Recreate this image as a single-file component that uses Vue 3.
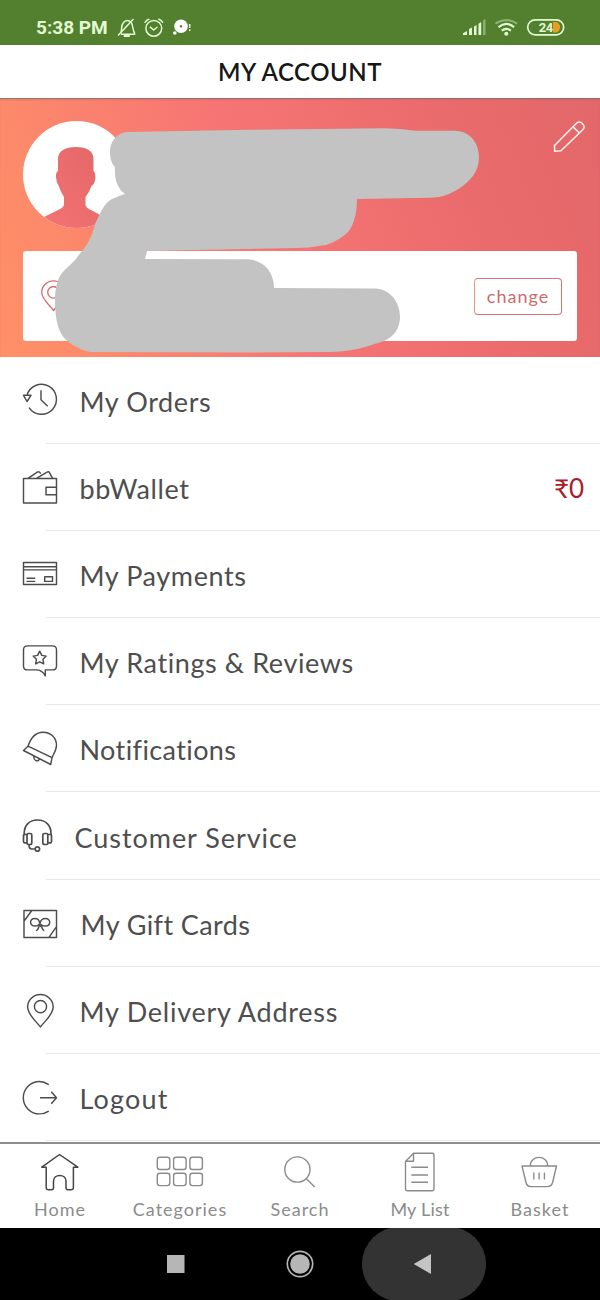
<script setup>
const rowHeight = 87.2
const listTop = 356.5

const rows = [
  { label: 'My Orders', kind: 'orders' },
  { label: 'bbWallet', kind: 'wallet', value: '₹0' },
  { label: 'My Payments', kind: 'payments' },
  { label: 'My Ratings & Reviews', kind: 'ratings' },
  { label: 'Notifications', kind: 'bell' },
  { label: 'Customer Service', kind: 'headset' },
  { label: 'My Gift Cards', kind: 'gift' },
  { label: 'My Delivery Address', kind: 'delivery' },
  { label: 'Logout', kind: 'logout' },
]

const icons = {
  orders:
    'M27 394.8A15 15 0 1 1 29 407.2M23.5 394.8H31L27 401ZM41 389.7V399.2L47.7 405.7',
  wallet:
    'M23.5 478.3H56.5V502.7H23.5ZM56.5 487H46V494.5H56.5M28 478L37.3 471.8Q39 470.8 40.8 473.3M36.5 478L47 471.8Q48.7 470.8 49.6 472.5L52.5 478',
  payments:
    'M23.5 562.5H56.5V584.5H23.5ZM23.5 566.7H56.5M23.5 569.8H56.5M26.5 578.2H35.2M26.5 581.3H35.2M44.7 576.7H52.5V581.3H44.7Z',
  ratings:
    'M27.5 646H52.5Q56.5 646 56.5 650V666Q56.5 670 52.5 670H45.3V676Q42.5 670.5 37 670H27.5Q23.5 670 23.5 666V650Q23.5 646 27.5 646ZM39.7 651.3L41.8 655.5L46.2 656.2L43 659.4L43.7 664L39.7 661.9L35.7 664L36.4 659.4L33.2 656.2L37.6 655.5Z',
  bell:
    'M28 746.5C30.5 739 35 732.5 43 732.5C51 732.5 56.5 738.5 56.5 745.5C56.5 750.5 53.5 754 52 758M28 746.5L52 758L50.7 764.8L23.5 750.8ZM33.7 756.3C33.5 760.5 37 763 39.7 759.3',
  headset:
    'M24.2 836V834C24.2 825.5 29.5 820.5 37.5 820.5S51 825.5 51 834V836M27 835H24.2Q23.5 835 23.5 836V842Q23.5 843.3 24.5 843.3H27M28.3 834H30.3Q31.8 834 31.8 835.5V843Q31.8 845 30.3 845H28.3Q27 845 27 843.5V835.5Q27 834 28.3 834ZM46.5 834H44.5Q42.8 834 42.8 835.5V843Q42.8 845 44.5 845H46.5Q47.8 845 47.8 843.5V835.5Q47.8 834 46.5 834ZM47.8 835H50.5Q51.5 835 51.5 836V842Q51.5 843.3 50.5 843.3H47.8M29 845.5Q29 849.5 32 849.5H35M39.6 849.5A2.2 2.2 0 1 1 35.2 849.5A2.2 2.2 0 1 1 39.6 849.5',
  gift:
    'M24 910.2H56.5V937.3H24ZM24 921L31.8 910.2M48.8 937.3L56.5 926.3M39.5 922C39 919.5 37 918.2 34.8 918.2C28.8 918.2 29.5 925.8 35 925.8C38 925.8 39.5 924.5 40.2 922.2C41 919.5 43 918.2 45.5 918.2C51.3 918.2 51 925.8 45.3 925.8C42.3 925.8 40.5 924.5 39.5 922ZM39 924L40.3 926.2L41.8 924M39 926C38.5 928 37.5 930 36 930.3M41.5 926C42 928 43 930 44.3 930.3',
  delivery:
    'M40.4 1026.8C36 1021 27.6 1014.5 27.6 1007A12.8 12.5 0 0 1 53.2 1007C53.2 1014.5 44.8 1021 40.4 1026.8ZM46.6 1006.5A6.1 6.1 0 1 1 34.4 1006.5A6.1 6.1 0 1 1 46.6 1006.5',
  logout:
    'M48.8 1084.8C45.5 1082.7 42.5 1081.6 39.5 1081.6A16.2 16.2 0 0 0 39.5 1114C43 1114 46 1113 48.8 1111.2M40 1097.8H56.3M51.3 1091.8L56.5 1097.8L51.3 1103.8',
}

const tabs = [
  { label: 'Home', kind: 'home', path: 'M59.5 1154.5L77.8 1167.2H73.4V1187.5Q73.4 1189.8 71 1189.8H68Q66 1189.8 66 1187.5V1181C66 1173.5 53.5 1173.5 53.5 1181V1187.5Q53.5 1189.8 51.5 1189.8H48.5Q46.2 1189.8 46.2 1187.5V1167.2H41.8Z' },
  { label: 'Categories', kind: 'categories', path: '' },
  { label: 'Search', kind: 'search', path: 'M310 1169.5A12.6 12.6 0 1 1 284.8 1169.5A12.6 12.6 0 1 1 310 1169.5M306.3 1178.7L314.8 1187' },
  { label: 'My List', kind: 'notes', path: 'M413.5 1153.3H432.5Q434 1153.3 434 1155V1189Q434 1190.7 432.5 1190.7H407.2Q405.5 1190.7 405.5 1189V1161.5ZM413.5 1153.3V1161.3H405.5M411.3 1167.3H428M411.3 1175H428M411.3 1182.3H428' },
  { label: 'Basket', kind: 'basket', path: 'M522 1166H556.5L552.6 1182.5Q551.4 1186.6 547.5 1186.6H531Q527 1186.6 526 1182.5ZM530.3 1166C530.3 1154.5 547.7 1154.5 547.7 1166M533.8 1172.5V1179.5M539.1 1172.5V1179.5M544.4 1172.5V1179.5' },
]
</script>

<template>
  <div class="screen">
    <header class="status">
      <span class="time">5:38 PM</span>
      <svg class="status-left" width="80" height="24" viewBox="116 16 80 24">
        <g fill="none" stroke="#e3fad4" stroke-width="1.5" stroke-linecap="round">
          <path d="M121 32.5C122 29 121 25 123.5 22.5Q127 18.5 131 22.2C133.5 25 132 29 134.5 33V34.2H121.5" />
          <path d="M118.5 35L133 19.5" />
          <path d="M124.5 36H129" stroke-width="2" />
          <circle cx="153.8" cy="28.3" r="7.9" />
          <path d="M150.3 27.2L153.7 30L157 27.2M145 22.3Q146.5 20 148.8 19.2M158.8 19.2Q161.2 20 162.6 22.3" />
        </g>
        <circle cx="181" cy="26.3" r="6.8" fill="#fff" />
        <circle cx="181" cy="26.3" r="1.2" fill="#52802e" />
        <circle cx="174.8" cy="33" r="1.8" fill="#fff" />
        <path d="M189.7 24V28M189.7 29.3V31" stroke="#e3fad4" stroke-width="1.5" />
      </svg>
      <svg class="status-right" width="106" height="24" viewBox="462 16 106 24">
        <g fill="#e3fad4">
          <path d="M463 35V33.2L467 31V35ZM469 35V29L472 27.5V35ZM474 35V26.5L476.5 25V35ZM478.5 35V23.7L481.2 22V35Z" />
          <path d="M483 35V20.5L485.5 19V35Z" opacity=".4" />
          <circle cx="506.3" cy="33.8" r="2" />
        </g>
        <g fill="none" stroke="#e3fad4" stroke-width="2.2">
          <path d="M501.7 30.7Q506.3 27 510.9 30.7M498.5 27.2Q506.3 20.5 514.1 27.2" />
          <path d="M495.4 23.6Q506.3 16.5 517.2 23.6" opacity=".4" />
        </g>
        <path d="M553 22H556.5A5 5.5 0 0 1 556.5 32.5H553Z" fill="#e99e23" />
        <rect x="527.7" y="19.8" width="36" height="15" rx="7.5" fill="none" stroke="#e3fad4" stroke-width="1.7" />
        <text x="538.7" y="32" class="battery">24</text>
      </svg>
    </header>

    <div class="title">MY ACCOUNT</div>

    <section class="hero">
      <svg class="avatar" width="108" height="108" viewBox="23 121 108 108">
        <defs>
          <clipPath id="face"><circle cx="76.5" cy="174.5" r="53.5" /></clipPath>
          <linearGradient id="skin" x1="0" y1="1" x2="1" y2="0">
            <stop offset="0" stop-color="#f57373" /><stop offset="1" stop-color="#e36769" />
          </linearGradient>
        </defs>
        <circle cx="76.5" cy="174.5" r="53.5" fill="#fff" />
        <path clip-path="url(#face)" fill="url(#skin)" d="M58 171V159C58 151 65 147 76 147S93.5 151 93.5 159V171Q95.5 172 95.3 178Q95 184 91.5 186Q89.5 192 85.5 197V205Q86 208 91 210L104 217V230H40V219L60 209Q64 207 64 204V197Q61 193 58.8 186Q56 182 56 177Q55.8 172 58 171Z" />
      </svg>
      <svg class="pencil" width="34" height="34" viewBox="553 120 34 34">
        <path d="M554.7 151.2L554.5 145.5L576 123.8Q579 120.5 582.3 123.5Q585.8 126.8 582.5 130L561 150.8ZM573 126.8L579.5 133" fill="none" stroke="#fff1ee" stroke-width="1.6" stroke-linejoin="round" />
      </svg>
      <div class="address">
        <svg width="28" height="34" viewBox="40 279 28 34">
          <path d="M53.5 310.5C49 304.5 41.7 299 41.7 292.3A11.8 11.5 0 0 1 65.3 292.3C65.3 299 58 304.5 53.5 310.5ZM59.3 292.3A5.7 5.7 0 1 1 47.7 292.3A5.7 5.7 0 1 1 59.3 292.3" fill="none" stroke="#d46b6f" stroke-width="1.3" />
        </svg>
        <button class="change">change</button>
      </div>
      <svg class="cover" width="600" height="259" viewBox="0 98 600 259">
        <path fill="#c3c3c3" d="M128 132L250 129.7L385 128.3Q400 128.5 415 130.7L455 130.7C470 131 479 143 479 157C479 172 470 181 460 188C450 194 443 197.5 430 197.8L357 199C357 215 353 228 346 234Q332 245 322 245.5Q310 248 295 248L147 251L145 259L248 259.3C262 260 274 270 274 288L375 288.5C390 289 400 302 400 317C400 328 394 337 384 341C368 346 355 352 325 352L250 352.5L90 352C80 350 66 342 62 335C57 327 55 315 55 300C55 290 57 281 60 276C65 268 75 262 78 256C86 247 92 238 95 224C100 214 103 204 112 199Q118 196 125 194C118 189 114 180 115 167C111 163 110 157 110 152C110 141 118 132 128 132Z" />
      </svg>
    </section>

    <main class="list">
      <div v-for="(row, i) in rows" :key="row.kind" class="row" :class="row.kind">
        <svg class="icon" width="60" height="87.2" :viewBox="`0 ${listTop + i * rowHeight} 60 87.2`">
          <path :d="icons[row.kind]" />
        </svg>
        <span class="label">{{ row.label }}</span>
        <span v-if="row.value" class="value">{{ row.value }}</span>
      </div>
    </main>

    <nav class="tabs">
      <div v-for="(tab, i) in tabs" :key="tab.kind" class="tab" :class="tab.kind">
        <svg width="120" height="50" :viewBox="`${i * 120} 1144 120 50`">
          <path v-if="tab.path" :d="tab.path" />
          <template v-else>
            <rect v-for="n in 6" :key="n" :x="157.3 + ((n - 1) % 3) * 16.3" :y="n > 3 ? 1173.3 : 1157.2" width="12.5" height="12.3" rx="2.5" />
          </template>
        </svg>
        <span>{{ tab.label }}</span>
      </div>
    </nav>

    <footer class="system">
      <svg width="600" height="72" viewBox="0 1228 600 72">
        <rect x="362" y="1227" width="124" height="74" rx="37" fill="#333" />
        <rect x="167" y="1255" width="17.5" height="18" fill="#b6b6b6" />
        <circle cx="300" cy="1264" r="12.7" fill="none" stroke="#b6b6b6" stroke-width="1.7" />
        <circle cx="300" cy="1264" r="9.8" fill="#b6b6b6" />
        <path d="M431 1254V1274L413.7 1264Z" fill="#c4c4c4" />
      </svg>
    </footer>
  </div>
</template>

<style>
body {
  margin: 0;
}
</style>

<style scoped>
.screen {
  width: 600px;
  height: 1300px;
  display: flex;
  flex-direction: column;
  overflow: hidden;
  background: #fff;
  font-family: Lato, "Open Sans", sans-serif;
}
svg {
  display: block;
  flex: none;
}
.status {
  box-sizing: border-box;
  height: 44.5px;
  flex: none;
  background: #52802e;
  display: flex;
  padding: 16px 32px 0 36px;
}
.time {
  width: 80px;
  font: 700 19px/24px Roboto, sans-serif;
  color: #e3fad4;
  white-space: nowrap;
}
.status-right {
  margin-left: auto;
}
.battery {
  font: 700 13px "Liberation Sans Narrow", Roboto, sans-serif;
  letter-spacing: -0.5px;
  fill: #e3fad4;
}
.title {
  height: 53.5px;
  flex: none;
  text-align: center;
  font-size: 24px;
  line-height: 54px;
  font-weight: 600;
  letter-spacing: 0.5px;
  color: #171717;
}
.hero {
  box-sizing: border-box;
  position: relative;
  height: 258.5px;
  flex: none;
  padding: 23px 23px 16px;
  display: grid;
  grid-template-columns: 1fr auto;
  grid-template-rows: 130px 90px;
  background: linear-gradient(67deg, #ff8f68 0%, #fd8a6a 14%, #f67474 46%, #e96a6b 80%, #e36769 100%);
  box-shadow: inset 0 2px 2px -1px #8b6b6b;
}
.pencil {
  margin-right: -10px;
  margin-top: -1px;
}
.address {
  box-sizing: border-box;
  grid-column: 1 / 3;
  background: #fff;
  border-radius: 3px;
  display: flex;
  align-items: center;
  justify-content: space-between;
  padding: 0 15px 0 17px;
}
.change {
  width: 88px;
  height: 37px;
  padding: 0;
  border: 1.5px solid #d77473;
  border-left-color: #e59a80;
  border-radius: 4px;
  background: #fff;
  color: #d0696c;
  font: 400 18px Lato, sans-serif;
  letter-spacing: 1px;
}
.cover {
  position: absolute;
  left: 0;
  top: 0;
}
.list {
  height: 785.5px;
  flex: none;
}
.row {
  box-sizing: border-box;
  height: 87.2px;
  display: flex;
  align-items: center;
  padding-right: 16px;
  background: linear-gradient(#e9e9e9, #e9e9e9) 46px 100% / 554px 1px no-repeat;
}
.icon path {
  fill: none;
  stroke: #4c4c4c;
  stroke-width: 1.45;
  stroke-linejoin: round;
}
.headset .icon path {
  stroke-width: 1.7;
}
.label {
  margin-left: 19.5px;
  padding-top: 2px;
  font-size: 27px;
  letter-spacing: 0.6px;
  color: #4e4e4e;
  white-space: nowrap;
}
.bell .label,
.gift .label {
  letter-spacing: 0.4px;
}
.headset .label {
  margin-left: 14.5px;
  letter-spacing: 0.95px;
}
.gift .label {
  margin-left: 20.5px;
}
.delivery .label {
  letter-spacing: 0.75px;
}
.logout .label {
  letter-spacing: 1.2px;
}
.value {
  margin-left: auto;
  padding-top: 2px;
  font-size: 26px;
  color: #a81c2c;
}
.tabs {
  box-sizing: border-box;
  height: 86px;
  flex: none;
  border-top: 2px solid #8e8e8e;
  display: flex;
  background: #fff;
}
.tab {
  width: 120px;
  text-align: center;
  font-size: 18px;
  line-height: 31px;
  letter-spacing: 1px;
  color: #8b8b8b;
}
.notes {
  letter-spacing: 0.2px;
}
.tab svg {
  fill: none;
  stroke: #8b8b8b;
  stroke-width: 1.4;
  stroke-linejoin: round;
}
.tab.home svg {
  stroke: #444;
  stroke-width: 1.5;
}
.system {
  height: 72px;
  flex: none;
  background: #000;
}
</style>
